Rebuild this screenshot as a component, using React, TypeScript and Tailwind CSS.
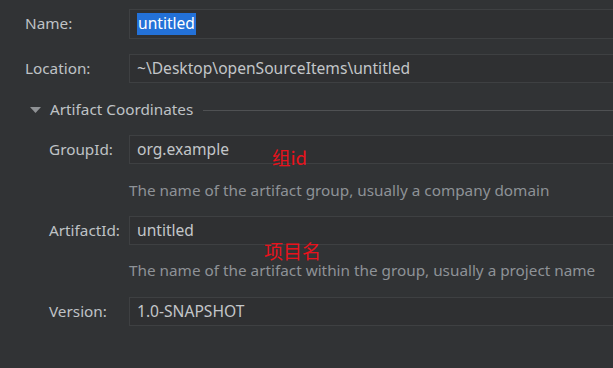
import React from "react";

const font = { fontFamily: '"Noto Sans", "Open Sans", "Noto Sans CJK SC", sans-serif' };

function Field({ children, h = "h-[29px]" }: { children: React.ReactNode; h?: string }) {
  return (
    <div className={`flex-1 ${h} mr-[-20px] border border-[#3e4042] bg-[#2f3032] flex items-center pl-[7px] text-[15.6px] text-[#c3c6c9]`}>
      {children}
    </div>
  );
}

export default function App() {
  return (
    <div
      className="relative w-[613px] h-[368px] overflow-hidden bg-[#313335] text-[#bfc2c5] text-[15.3px] leading-none"
      style={font}
    >
      <div className="flex flex-col pt-[9px]">
        <div className="flex items-center">
          <div className="w-[129px] pl-[25px]">Name:</div>
          <Field h="h-[30px]">
            <span className="bg-[#2371d8] text-white px-[1px] h-[22px] flex items-center">untitled</span>
          </Field>
        </div>
        <div className="flex items-center mt-[15px]">
          <div className="w-[129px] pl-[25px]">Location:</div>
          <Field>~\Desktop\openSourceItems\untitled</Field>
        </div>
        <div className="flex items-center mt-[17px] h-[20px]">
          <svg width="11" height="6" viewBox="0 0 11 6" className="ml-[30px]">
            <polygon points="0,0 11,0 5.5,6" fill="#8f9295" />
          </svg>
          <span className="ml-[9px]">Artifact Coordinates</span>
          <div className="flex-1 h-px bg-[#4f5153] ml-[10px]" />
        </div>
        <div className="flex items-center mt-[15px]">
          <div className="w-[129px] pl-[49px]">GroupId:</div>
          <Field>org.example</Field>
        </div>
        <div className="h-[20px] mt-[17px] pl-[129px] flex items-center text-[#8e9297]">
          The name of the artifact group, usually a company domain
        </div>
        <div className="flex items-center mt-[15px]">
          <div className="w-[129px] pl-[49px]">ArtifactId:</div>
          <Field>untitled</Field>
        </div>
        <div className="h-[18px] mt-[17px] pl-[129px] flex items-center text-[#8e9297]">
          The name of the artifact within the group, usually a project name
        </div>
        <div className="flex items-center mt-[17px]">
          <div className="w-[129px] pl-[49px]">Version:</div>
          <Field>1.0-SNAPSHOT</Field>
        </div>
      </div>
      <div className="absolute left-[272px] top-[148px] text-[18.5px] leading-[18px] text-[#e8121c]" style={{ fontFamily: '"Noto Sans CJK SC", sans-serif' }}>
        组id
      </div>
      <div className="absolute left-[264px] top-[241px] text-[19px] leading-[19px] text-[#e8121c]" style={{ fontFamily: '"Noto Sans CJK SC", sans-serif' }}>
        项目名
      </div>
    </div>
  );
}
